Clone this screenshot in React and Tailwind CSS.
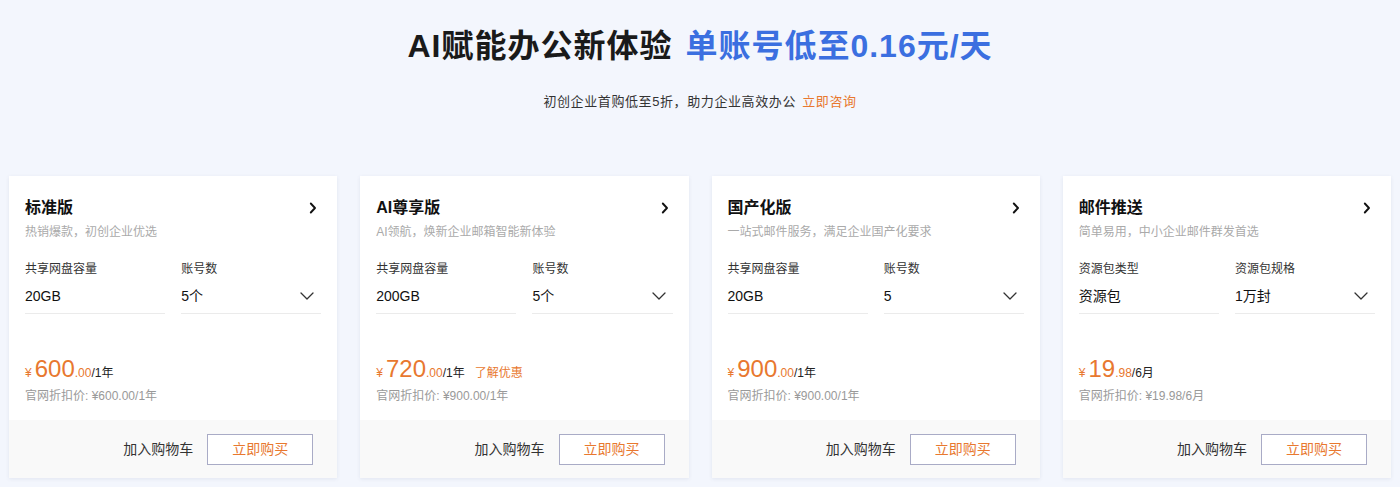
import React from 'react';

const font = { fontFamily: '"Liberation Sans", "Noto Sans CJK SC", sans-serif' };

const plans = [
  {
    name: '标准版',
    desc: '热销爆款，初创企业优选',
    labels: ['共享网盘容量', '账号数'],
    values: ['20GB', '5个'],
    yen: '600',
    cents: '.00',
    unit: '/1年',
    official: '官网折扣价: ¥600.00/1年',
  },
  {
    name: 'AI尊享版',
    desc: 'AI领航，焕新企业邮箱智能新体验',
    labels: ['共享网盘容量', '账号数'],
    values: ['200GB', '5个'],
    yen: '720',
    cents: '.00',
    unit: '/1年',
    promo: '了解优惠',
    official: '官网折扣价: ¥900.00/1年',
  },
  {
    name: '国产化版',
    desc: '一站式邮件服务，满足企业国产化要求',
    labels: ['共享网盘容量', '账号数'],
    values: ['20GB', '5'],
    yen: '900',
    cents: '.00',
    unit: '/1年',
    official: '官网折扣价: ¥900.00/1年',
  },
  {
    name: '邮件推送',
    desc: '简单易用，中小企业邮件群发首选',
    labels: ['资源包类型', '资源包规格'],
    values: ['资源包', '1万封'],
    yen: '19',
    cents: '.98',
    unit: '/6月',
    official: '官网折扣价: ¥19.98/6月',
  },
];

const ChevronRight = () => (
  <svg width="8" height="12" viewBox="0 0 8 12" fill="none" className="mr-[4px]">
    <path d="M1.8 1.5L6 6l-4.2 4.5" stroke="#111" strokeWidth="1.9" strokeLinecap="round" strokeLinejoin="round" />
  </svg>
);

const ChevronDown = () => (
  <svg width="14" height="8" viewBox="0 0 14 8" fill="none" className="mr-[7px]">
    <path d="M1 1l6 6 6-6" stroke="#333" strokeWidth="1.3" strokeLinecap="round" strokeLinejoin="round" />
  </svg>
);

const PlanCard = ({ plan }) => (
  <div className="bg-white h-[302px] flex flex-col shadow-[0_1px_4px_rgba(30,40,90,0.08)]">
    <div className="h-[244px] px-4 pt-5">
      <div className="flex items-center justify-between h-6">
        <h3 className="text-[16px] leading-6 font-bold text-[#111]">{plan.name}</h3>
        <ChevronRight />
      </div>
      <p className="mt-[3px] text-[12px] leading-[18px] text-[#aaa]">{plan.desc}</p>
      <div className="grid grid-cols-2 gap-4 mt-[19px]">
        {plan.labels.map((label, i) => (
          <div key={label} className="border-b border-[#ebebeb] pb-[7px]">
            <div className="text-[12px] leading-[18px] text-[#333]">{label}</div>
            <div className="mt-2 flex items-center justify-between h-5">
              <span className="text-[14px] leading-5 text-[#111]">{plan.values[i]}</span>
              {i === 1 && <ChevronDown />}
            </div>
          </div>
        ))}
      </div>
      <div className="mt-[41px] flex items-baseline h-7 leading-7">
        <span className="text-[12px] text-[#e8782f] mr-[3px]">¥</span>
        <span className="text-[24px] text-[#e8782f]">{plan.yen}</span>
        <span className="text-[12px] text-[#e8782f]">{plan.cents}</span>
        <span className="text-[12px] text-[#222]">{plan.unit}</span>
        {plan.promo && <span className="ml-[10px] text-[12px] text-[#e8782f]">{plan.promo}</span>}
      </div>
      <p className="mt-[4px] text-[12px] leading-[18px] text-[#999]">{plan.official}</p>
    </div>
    <div className="flex-1 bg-[#f9f9f9] flex items-center justify-end pr-6 gap-[14px]">
      <button className="text-[14px] text-[#333]">加入购物车</button>
      <button className="w-[106px] h-[31px] border border-[#a9abc6] bg-white text-[14px] text-[#e8782f]">
        立即购买
      </button>
    </div>
  </div>
);

export default function App() {
  return (
    <div style={font} className="w-[1400px] min-h-[487px] bg-[#f3f6fd]">
      <div className="pt-[26px] text-center">
        <h1 className="text-[32px] leading-10 font-bold tracking-[1px] text-[#1a1a1a]">
          AI赋能办公新体验<span className="ml-[13px] text-[#3b6fe0]">单账号低至0.16元/天</span>
        </h1>
        <p className="mt-[26px] text-[13px] leading-5 tracking-[0.6px] text-[#333]">
          初创企业首购低至5折，助力企业高效办公 <span className="text-[#e8782f] ml-[2px]">立即咨询</span>
        </p>
      </div>
      <div className="grid grid-cols-4 gap-[23px] px-[9px] mt-[64px]">
        {plans.map((p) => (
          <PlanCard key={p.name} plan={p} />
        ))}
      </div>
    </div>
  );
}
